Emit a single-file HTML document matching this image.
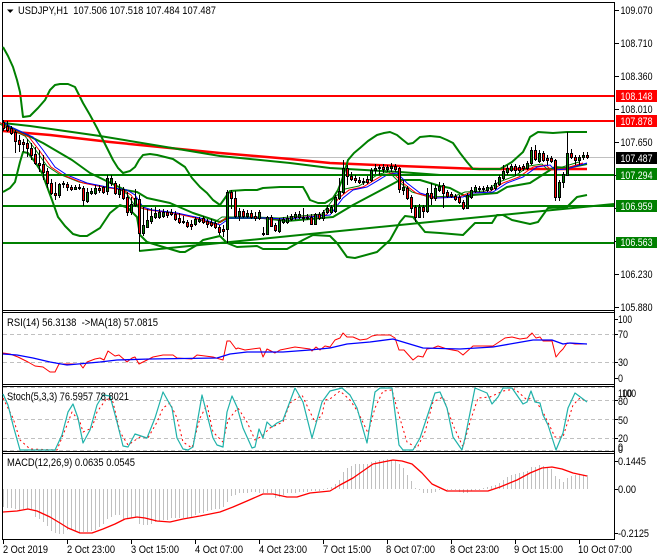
<!DOCTYPE html>
<html><head><meta charset="utf-8"><title>USDJPY,H1</title>
<style>
html,body{margin:0;padding:0;background:#fff;width:660px;height:560px;overflow:hidden}
svg{display:block}
text{font-family:"Liberation Sans",sans-serif;font-size:11px;fill:#000}
.w{fill:#fff}
.l{fill:none;stroke-linejoin:round}
</style></head><body>
<svg width="660" height="560" viewBox="0 0 660 560" xmlns="http://www.w3.org/2000/svg">
<rect width="660" height="560" fill="#fff"/>

<!-- frames -->
<g fill="#000" shape-rendering="crispEdges">
<rect x="2" y="2" width="613" height="1"/>
<rect x="2" y="310" width="613" height="1"/>
<rect x="2" y="312" width="613" height="1"/>
<rect x="2" y="384" width="613" height="1"/>
<rect x="2" y="386" width="613" height="1"/>
<rect x="2" y="451" width="613" height="1"/>
<rect x="2" y="453" width="613" height="1"/>
<rect x="2" y="539" width="613" height="1"/>
<rect x="2" y="2" width="1" height="538"/>
<rect x="614" y="2" width="1" height="538"/>
</g>

<!-- current price line -->
<path d="M3 157.5H614" stroke="#c0c0c0" fill="none" shape-rendering="crispEdges"/>

<!-- trend lines -->
<polyline class="l" stroke="#ff0000" stroke-width="2.5" points="3,131 50,135 110,142 220,153 290,159 330,163 400,166 440,167.5 480,169 587,169"/>
<polyline class="l" stroke="#008000" stroke-width="2" points="3,123 30,126 100,136 160,146 220,156 290,163 330,168 400,172 440,175 520,175"/>
<polyline class="l" stroke="#008000" stroke-width="2" points="139,251 240,241 440,221 614,204"/>

<!-- bollinger bands -->
<polyline class="l" stroke="#008000" stroke-width="2" points="3,47 8,56 13,67 17,80 20,92 23,117 30,116 38,108 45,100 50,90 55,85 60,84 68,84 75,87 80,97 83,103 90,115 97,128 107,148 113,160 118,168 123,173 130,171 135,167 139,160 143,155 150,154 157,155 173,159 185,167 192,178 200,187 207,193 213,200 220,205 225,198 230,191 245,190 257,190 263,188 280,187 303,187 307,194 310,200 318,203 325,203 333,198 338,190 342,180 348,160 354,153 360,148 368,141 377,135 384,133 390,132 397,135 403,140 408,144 413,143 420,137 430,136 440,137 447,140 453,143 460,153 467,162 473,169 500,169 512,162 523,152 527,144 530,137 538,132 553,133 567,132 587,132"/>
<polyline class="l" stroke="#008000" stroke-width="2" points="3,192 10,188 15,182 20,162 23,152 28,153 35,162 42,173 52,200 58,217 65,226 73,234 80,236 87,236 100,228 110,213 120,205 128,208 137,217 140,235 147,242 160,246 180,252 185,252 197,245 203,240 220,236 227,243 237,247 257,246 263,249 287,249 303,240 313,235 330,236 337,243 347,257 355,258 377,252 390,240 400,222 405,216 413,217 425,232 440,233 463,235 468,230 475,223 492,223 497,215 503,215 512,220 530,224 538,222 548,208 567,207 577,197 587,195"/>
<polyline class="l" stroke="#008000" stroke-width="2" points="3,123 10,127 23,133 43,143 72,160 90,173 125,190 137,192 147,198 170,203 193,213 220,222 227,218 263,218 287,221 333,217 353,205 387,187 400,180 420,180 440,186 450,188 467,197 473,195 497,193 507,187 530,183 547,172 555,167 567,168 587,164"/>

<!-- moving averages -->
<defs><polyline id="ma" fill="none" points="3,122 13,128 33,137 43,150 55,167 67,175 87,183 107,187 127,190 135,195 143,207 152,210 177,213 200,218 220,225 230,218 263,218 287,219 330,215 343,198 353,190 367,187 387,175 397,173 407,183 420,193 437,198 463,197 473,193 493,192 507,183 523,177 537,167 550,165 555,170 567,169 587,163"/></defs>
<use href="#ma" stroke="#008000" transform="translate(-8,-1)"/>
<use href="#ma" stroke="#ff0000" transform="translate(-4,0)"/>
<use href="#ma" stroke="#0000ff"/>

<!-- horizontal levels -->
<g fill="none" stroke-width="2" shape-rendering="crispEdges">
<path d="M3 96H614M3 121H614" stroke="#ff0000"/>
<path d="M3 175H614M3 206H614M3 243H614" stroke="#008000"/>
</g>

<!-- candle wicks -->
<path shape-rendering="crispEdges" stroke="#000" fill="none" d="M3.5 120V131M7.5 121V132M11.5 126V135M15.5 130V153M19.5 135V152M23.5 139V152M27.5 139V157M31.5 143V160M35.5 147V165M39.5 150V172M43.5 155V180M47.5 168V188M51.5 179V195M55.5 182V200M59.5 183V198M63.5 181V188M67.5 182V191M71.5 185V191M75.5 185V190M79.5 184V190M83.5 186V206M87.5 188V203M91.5 188V195M95.5 185V195M99.5 185V193M103.5 186V194M107.5 175V195M111.5 175V186M115.5 181V195M119.5 184V198M123.5 187V200M127.5 192V216M131.5 197V215M135.5 189V207M139.5 195V251M143.5 207V236M147.5 209V228M151.5 208V224M155.5 207V219M159.5 209V219M163.5 209V218M167.5 210V218M171.5 209V216M175.5 211V221M179.5 213V224M183.5 216V224M187.5 220V228M191.5 220V230M195.5 217V226M199.5 217V223M203.5 216V224M207.5 219V228M211.5 219V227M215.5 221V229M219.5 225V235M223.5 225V237M227.5 190V243M231.5 190V209M235.5 191V218M239.5 208V221M243.5 209V218M247.5 210V218M251.5 210V219M255.5 212V221M259.5 210V220M263.5 227V236M267.5 216V235M271.5 215V227M275.5 223V232M279.5 218V233M283.5 217V224M287.5 215V224M291.5 214V221M295.5 212V220M299.5 211V219M303.5 208V222M307.5 214V220M311.5 214V225M315.5 213V225M319.5 212V220M323.5 210V221M327.5 205V214M331.5 205V214M335.5 195V213M339.5 178V200M343.5 160V194M347.5 165V185M351.5 172V181M355.5 175V183M359.5 177V184M363.5 178V185M367.5 176V184M371.5 168V182M375.5 164V174M379.5 165V175M383.5 164V173M387.5 165V172M391.5 163V172M395.5 164V172M399.5 167V193M403.5 180V195M407.5 186V200M411.5 195V213M415.5 205V222M419.5 204V218M423.5 205V218M427.5 188V213M431.5 183V205M435.5 185V201M439.5 182V192M443.5 183V208M447.5 190V198M451.5 192V198M455.5 194V201M459.5 195V204M463.5 200V210M467.5 193V209M471.5 187V199M475.5 185V193M479.5 186V192M483.5 186V192M487.5 185V192M491.5 185V191M495.5 180V190M499.5 175V186M503.5 165V180M507.5 165V175M511.5 164V172M515.5 164V176M519.5 165V173M523.5 164V171M527.5 161V170M531.5 147V165M535.5 145V161M539.5 150V163M543.5 151V162M547.5 155V165M551.5 156V163M555.5 159V201M559.5 180V201M563.5 172V188M567.5 132V176M571.5 149V159M575.5 155V165M579.5 155V165M583.5 152V160M587.5 152V159"/>

<!-- down candles -->
<path shape-rendering="crispEdges" stroke="#000" fill="#ff0000" d="M2.5 122.5h2v6h-2zM6.5 126.5h2v4h-2zM10.5 128.5h2v5h-2zM14.5 132.5h2v9h-2zM18.5 140.5h2v4h-2zM22.5 142.5h2v2h-2zM26.5 143.5h2v5h-2zM30.5 148.5h2v7h-2zM34.5 154.5h2v9h-2zM38.5 163.5h2v2h-2zM42.5 164.5h2v8h-2zM46.5 171.5h2v12h-2zM50.5 183.5h2v10h-2zM54.5 193.5h2v2h-2zM66.5 184.5h2v3h-2zM70.5 187.5h2v2h-2zM82.5 188.5h2v12h-2zM98.5 188.5h2v2h-2zM102.5 187.5h2v5h-2zM114.5 183.5h2v10h-2zM122.5 189.5h2v9h-2zM126.5 197.5h2v15h-2zM138.5 199.5h2v34h-2zM166.5 212.5h2v3h-2zM170.5 212.5h2v2h-2zM174.5 214.5h2v5h-2zM178.5 218.5h2v4h-2zM182.5 221.5h2v1h-2zM186.5 222.5h2v4h-2zM190.5 224.5h2v2h-2zM202.5 218.5h2v4h-2zM206.5 221.5h2v3h-2zM210.5 222.5h2v3h-2zM214.5 223.5h2v4h-2zM218.5 227.5h2v5h-2zM222.5 229.5h2v2h-2zM230.5 192.5h2v6h-2zM234.5 198.5h2v18h-2zM242.5 211.5h2v5h-2zM250.5 213.5h2v4h-2zM254.5 216.5h2v2h-2zM270.5 217.5h2v9h-2zM274.5 225.5h2v5h-2zM306.5 217.5h2v1h-2zM310.5 217.5h2v7h-2zM318.5 214.5h2v4h-2zM346.5 168.5h2v8h-2zM350.5 176.5h2v3h-2zM354.5 178.5h2v2h-2zM358.5 180.5h2v2h-2zM366.5 179.5h2v3h-2zM378.5 167.5h2v1h-2zM382.5 167.5h2v2h-2zM394.5 166.5h2v3h-2zM398.5 168.5h2v21h-2zM406.5 188.5h2v10h-2zM410.5 197.5h2v11h-2zM414.5 207.5h2v10h-2zM422.5 207.5h2v4h-2zM430.5 193.5h2v5h-2zM442.5 185.5h2v8h-2zM446.5 192.5h2v4h-2zM450.5 194.5h2v2h-2zM454.5 196.5h2v3h-2zM458.5 197.5h2v5h-2zM462.5 202.5h2v6h-2zM514.5 166.5h2v4h-2zM518.5 167.5h2v3h-2zM522.5 166.5h2v2h-2zM534.5 150.5h2v9h-2zM542.5 153.5h2v7h-2zM546.5 158.5h2v2h-2zM550.5 158.5h2v3h-2zM554.5 160.5h2v37h-2zM570.5 153.5h2v4h-2zM574.5 157.5h2v3h-2zM586.5 155.5h2v2h-2z"/>

<!-- up candles -->
<path shape-rendering="crispEdges" stroke="#000" fill="#008000" d="M58.5 184.5h2v11h-2zM62.5 183.5h2v1h-2zM74.5 187.5h2v2h-2zM78.5 187.5h2v1h-2zM86.5 192.5h2v9h-2zM90.5 191.5h2v2h-2zM94.5 188.5h2v5h-2zM106.5 178.5h2v13h-2zM110.5 178.5h2v5h-2zM118.5 189.5h2v5h-2zM130.5 204.5h2v8h-2zM134.5 198.5h2v7h-2zM142.5 225.5h2v8h-2zM146.5 220.5h2v7h-2zM150.5 216.5h2v5h-2zM154.5 213.5h2v4h-2zM158.5 212.5h2v5h-2zM162.5 212.5h2v4h-2zM194.5 219.5h2v5h-2zM198.5 219.5h2v2h-2zM226.5 192.5h2v37h-2zM238.5 211.5h2v5h-2zM246.5 213.5h2v3h-2zM258.5 212.5h2v6h-2zM262.5 233.5h2v1h-2zM266.5 217.5h2v17h-2zM278.5 220.5h2v11h-2zM282.5 219.5h2v3h-2zM286.5 218.5h2v4h-2zM290.5 216.5h2v3h-2zM294.5 214.5h2v3h-2zM298.5 214.5h2v3h-2zM302.5 217.5h2v1h-2zM314.5 214.5h2v10h-2zM322.5 212.5h2v6h-2zM326.5 208.5h2v4h-2zM330.5 207.5h2v5h-2zM334.5 197.5h2v14h-2zM338.5 191.5h2v7h-2zM342.5 168.5h2v24h-2zM362.5 181.5h2v1h-2zM370.5 170.5h2v10h-2zM374.5 168.5h2v2h-2zM386.5 167.5h2v2h-2zM390.5 166.5h2v2h-2zM402.5 187.5h2v3h-2zM418.5 207.5h2v10h-2zM426.5 193.5h2v18h-2zM434.5 188.5h2v10h-2zM438.5 186.5h2v4h-2zM466.5 195.5h2v13h-2zM470.5 190.5h2v7h-2zM474.5 187.5h2v4h-2zM478.5 188.5h2v1h-2zM482.5 188.5h2v1h-2zM486.5 187.5h2v3h-2zM490.5 187.5h2v2h-2zM494.5 183.5h2v5h-2zM498.5 177.5h2v7h-2zM502.5 171.5h2v7h-2zM506.5 168.5h2v4h-2zM510.5 166.5h2v4h-2zM526.5 163.5h2v5h-2zM530.5 150.5h2v13h-2zM538.5 153.5h2v8h-2zM558.5 182.5h2v15h-2zM562.5 174.5h2v8h-2zM566.5 153.5h2v22h-2zM578.5 157.5h2v3h-2zM582.5 155.5h2v2h-2z"/>

<!-- RSI -->
<path d="M3 334.5H614M3 362.5H614" stroke="#c0c0c0" stroke-dasharray="4 3" fill="none" shape-rendering="crispEdges"/>
<polyline class="l" stroke="#ff0000" points="3,353 10,354 18,357 28,362 35,366 43,367 50,372 55,372 59,364 80,364 83,368 87,362 95,359 100,358 104,360 108,351 115,356 119,355 127,362 132,358 135,357 139,364 147,360 153,357 163,355 173,355 177,358 192,359 197,355 213,357 223,360 227,341 230,341 236,349 238,348 245,350 260,348 263,357 267,349 275,353 280,350 295,347 310,349 312,351 316,347 320,350 325,346 330,347 335,340 340,338 343,333 347,337 353,337 360,340 367,339 372,336 377,335 390,335 395,338 399,350 404,350 413,360 418,356 423,357 427,349 433,348 438,346 447,349 458,351 463,355 473,346 487,346 493,346 505,338 512,337 520,339 527,338 532,333 536,338 540,337 543,341 552,341 556,357 560,352 563,349 567,343 570,343 575,344 582,344 587,344"/>
<polyline class="l" stroke="#0000ff" stroke-width="1.3" points="3,354 17,355 33,358 50,362 67,365 100,362 117,360 150,359 217,358 230,354 247,352 283,352 310,350 330,348 347,344 370,342 393,339 403,342 423,348 460,349 493,347 510,344 533,340 552,340 563,344 570,343 587,344"/>

<!-- Stochastic -->
<path d="M3 387.5H614M3 400.5H614M3 419.5H614M3 438.5H614M3 450.5H614" stroke="#c0c0c0" stroke-dasharray="4 3" fill="none" shape-rendering="crispEdges"/>
<polyline class="l" stroke="#ff0000" stroke-dasharray="2 3" points="3,398 8,408 13,418 20,440 30,449 57,450 67,425 72,412 80,422 83,432 92,428 97,412 107,398 113,402 120,432 128,445 140,437 148,438 157,422 163,408 170,403 177,418 183,442 192,448 200,418 207,405 213,432 223,442 228,420 238,408 247,422 255,440 262,436 270,428 283,422 290,403 302,395 310,412 315,422 322,415 325,400 330,399 340,391 350,400 358,412 368,433 375,408 383,391 392,390 398,412 407,442 417,448 425,432 433,402 443,397 453,425 463,447 470,422 478,398 490,397 503,391 515,389 527,400 533,397 543,412 555,437 563,437 573,405 580,398 587,402"/>
<polyline class="l" stroke="#20b2aa" stroke-width="1.2" points="3,394 8,405 13,425 20,450 55,450 62,435 68,412 73,404 78,418 83,443 90,430 97,405 103,395 110,396 117,422 123,446 128,447 135,434 147,438 155,418 163,392 172,408 177,438 183,449 188,450 193,447 202,395 213,438 217,445 223,447 227,412 232,396 237,407 243,428 252,448 255,447 259,429 263,438 267,422 272,427 277,423 283,420 295,388 303,402 312,438 322,402 330,391 342,388 350,395 357,408 367,443 375,392 380,388 392,388 399,445 403,450 413,450 420,438 430,408 435,393 440,392 447,408 453,437 462,450 465,438 475,388 487,393 492,404 498,397 503,388 512,388 523,404 527,402 531,391 535,402 540,403 543,415 548,425 556,450 563,433 568,408 575,393 587,402"/>

<!-- MACD histogram -->
<path shape-rendering="crispEdges" stroke="#c0c0c0" fill="none" d="M3.5 489V507M7.5 489V508M11.5 489V508M15.5 489V509M19.5 489V510M23.5 489V509M27.5 489V509M31.5 489V509M35.5 489V517M39.5 489V519M43.5 489V522M47.5 489V526M51.5 489V531M55.5 489V533M59.5 489V534M63.5 489V534M67.5 489V530M71.5 489V529M75.5 489V531M79.5 489V532M83.5 489V532M87.5 489V532M91.5 489V531M95.5 489V530M99.5 489V527M103.5 489V524M107.5 489V519M111.5 489V517M115.5 489V515M119.5 489V515M123.5 489V520M127.5 489V518M131.5 489V518M135.5 489V518M139.5 489V524M143.5 489V525M147.5 489V525M151.5 489V524M155.5 489V522M159.5 489V521M163.5 489V520M167.5 489V520M171.5 489V518M175.5 489V518M179.5 489V518M183.5 489V518M187.5 489V518M191.5 489V518M195.5 489V515M199.5 489V513M203.5 489V513M207.5 489V511M211.5 489V510M215.5 489V509M219.5 489V509M223.5 489V507M227.5 489V502M231.5 489V496M235.5 489V495M239.5 489V493M243.5 489V493M247.5 489V493M251.5 489V492M255.5 489V492M259.5 489V493M263.5 489V493M267.5 489V493M271.5 489V493M275.5 489V498M279.5 489V497M283.5 489V495M287.5 489V493M291.5 489V493M295.5 489V493M299.5 489V492M303.5 489V492M307.5 489V492M311.5 489V491M315.5 489V491M319.5 489V491M323.5 489V490M327.5 489V488M331.5 489V487M335.5 489V484M339.5 489V480M343.5 489V472M347.5 489V468M351.5 489V466M355.5 489V464M359.5 489V464M363.5 489V464M367.5 489V464M371.5 489V462M375.5 489V461M379.5 489V460M383.5 489V460M387.5 489V459M391.5 489V460M395.5 489V461M399.5 489V464M403.5 489V468M407.5 489V475M411.5 489V481M415.5 489V488M419.5 489V490M423.5 489V493M427.5 489V493M431.5 489V493M435.5 489V492M439.5 489V490M443.5 489V490M447.5 489V490M451.5 489V490M455.5 489V490M459.5 489V492M463.5 489V493M467.5 489V493M471.5 489V491M475.5 489V490M479.5 489V490M483.5 489V488M487.5 489V487M491.5 489V486M495.5 489V485M499.5 489V483M503.5 489V480M507.5 489V477M511.5 489V475M515.5 489V474M519.5 489V473M523.5 489V472M527.5 489V471M531.5 489V467M535.5 489V467M539.5 489V465M543.5 489V466M547.5 489V467M551.5 489V469M555.5 489V476M559.5 489V479M563.5 489V482M567.5 489V478M571.5 489V476M575.5 489V475M579.5 489V475M583.5 489V475M587.5 489V475"/>
<polyline class="l" stroke="#ff0000" stroke-width="1.3" points="3,512 17,511 28,509 37,511 50,517 60,523 68,528 80,533 92,533 103,529 115,524 125,519 137,517 145,518 157,521 170,522 183,519 200,516 220,512 233,507 247,501 263,494 273,494 287,497 297,497 310,493 330,491 340,485 353,478 363,471 373,464 383,462 393,460 402,461 412,464 422,473 432,484 447,491 488,491 500,487 517,480 530,473 542,468 552,467 562,469 573,473 587,476"/>

<!-- axis ticks -->
<path shape-rendering="crispEdges" stroke="#000" fill="none" d="M615 10.5h4M615 43.5h4M615 76.5h4M615 109.5h4M615 142.5h4M615 175.5h4M615 208.5h4M615 241.5h4M615 274.5h4M615 307.5h4M615 319.5h3M615 334.5h3M615 362.5h3M615 378.5h3M615 400.5h3M615 419.5h3M615 438.5h3M615 461.5h3M615 489.5h3M615 533.5h3M3.5 540v4M67.5 540v4M131.5 540v4M195.5 540v4M259.5 540v4M323.5 540v4M387.5 540v4M451.5 540v4M515.5 540v4M579.5 540v4"/>

<!-- price tags -->
<g shape-rendering="crispEdges">
<rect x="616" y="90" width="41" height="12" fill="#ff0000"/>
<rect x="616" y="115" width="41" height="12" fill="#ff0000"/>
<rect x="616" y="152" width="41" height="12" fill="#000"/>
<rect x="616" y="168" width="41" height="12" fill="#008000"/>
<rect x="616" y="200" width="41" height="12" fill="#008000"/>
<rect x="616" y="237" width="41" height="11" fill="#008000"/>
</g>

<!-- header -->
<polygon points="7,9.5 13.5,9.5 10.2,13" fill="#000"/>
<text x="18" y="14" textLength="198" lengthAdjust="spacingAndGlyphs" xml:space="preserve">USDJPY,H1  107.506 107.518 107.484 107.487</text>
<text x="7" y="326" textLength="151" lengthAdjust="spacingAndGlyphs" xml:space="preserve">RSI(14) 56.3138  -&gt;MA(18) 57.0815</text>
<text x="7" y="400" textLength="122" lengthAdjust="spacingAndGlyphs">Stoch(5,3,3) 76.5957 78.8021</text>
<text x="7" y="466" textLength="128" lengthAdjust="spacingAndGlyphs">MACD(12,26,9) 0.0635 0.0545</text>

<!-- price axis -->
<g>
<text x="620.5" y="14" textLength="32" lengthAdjust="spacingAndGlyphs">109.070</text>
<text x="620.5" y="47" textLength="32" lengthAdjust="spacingAndGlyphs">108.710</text>
<text x="620.5" y="80" textLength="32" lengthAdjust="spacingAndGlyphs">108.360</text>
<text x="620.5" y="113" textLength="32" lengthAdjust="spacingAndGlyphs">108.010</text>
<text x="620.5" y="146" textLength="32" lengthAdjust="spacingAndGlyphs">107.650</text>
<text x="620.5" y="278" textLength="32" lengthAdjust="spacingAndGlyphs">106.230</text>
<text x="620.5" y="311" textLength="32" lengthAdjust="spacingAndGlyphs">105.880</text>
<text class="w" x="620.5" y="100" textLength="32" lengthAdjust="spacingAndGlyphs">108.148</text>
<text class="w" x="620.5" y="125" textLength="32" lengthAdjust="spacingAndGlyphs">107.878</text>
<text class="w" x="620.5" y="162" textLength="32" lengthAdjust="spacingAndGlyphs">107.487</text>
<text class="w" x="620.5" y="179" textLength="32" lengthAdjust="spacingAndGlyphs">107.294</text>
<text class="w" x="620.5" y="210" textLength="32" lengthAdjust="spacingAndGlyphs">106.959</text>
<text class="w" x="620.5" y="246" textLength="32" lengthAdjust="spacingAndGlyphs">106.563</text>
<text x="618" y="323" textLength="14" lengthAdjust="spacingAndGlyphs">100</text>
<text x="618" y="338" textLength="10" lengthAdjust="spacingAndGlyphs">70</text>
<text x="618" y="366" textLength="10" lengthAdjust="spacingAndGlyphs">30</text>
<text x="618" y="382" textLength="5" lengthAdjust="spacingAndGlyphs">0</text>
<text x="618" y="397" textLength="14" lengthAdjust="spacingAndGlyphs">100</text>
<text x="622" y="397" textLength="14" lengthAdjust="spacingAndGlyphs">100</text>
<text x="618" y="405" textLength="10" lengthAdjust="spacingAndGlyphs">80</text>
<text x="618" y="424" textLength="10" lengthAdjust="spacingAndGlyphs">50</text>
<text x="618" y="442" textLength="10" lengthAdjust="spacingAndGlyphs">20</text>
<text x="618" y="451" textLength="5" lengthAdjust="spacingAndGlyphs">0</text>
<text x="618" y="453" textLength="5" lengthAdjust="spacingAndGlyphs">0</text>
<text x="618" y="465" textLength="28" lengthAdjust="spacingAndGlyphs">0.1445</text>
<text x="618" y="493" textLength="18" lengthAdjust="spacingAndGlyphs">0.00</text>
<text x="618" y="537" textLength="31" lengthAdjust="spacingAndGlyphs">-0.2125</text>
</g>

<!-- time axis -->
<g>
<text x="3" y="553" textLength="45" lengthAdjust="spacingAndGlyphs">2 Oct 2019</text>
<text x="67" y="553" textLength="48" lengthAdjust="spacingAndGlyphs">2 Oct 23:00</text>
<text x="131" y="553" textLength="48" lengthAdjust="spacingAndGlyphs">3 Oct 15:00</text>
<text x="195" y="553" textLength="48" lengthAdjust="spacingAndGlyphs">4 Oct 07:00</text>
<text x="259" y="553" textLength="48" lengthAdjust="spacingAndGlyphs">4 Oct 23:00</text>
<text x="323" y="553" textLength="48" lengthAdjust="spacingAndGlyphs">7 Oct 15:00</text>
<text x="386" y="553" textLength="49" lengthAdjust="spacingAndGlyphs">8 Oct 07:00</text>
<text x="450" y="553" textLength="49" lengthAdjust="spacingAndGlyphs">8 Oct 23:00</text>
<text x="514" y="553" textLength="49" lengthAdjust="spacingAndGlyphs">9 Oct 15:00</text>
<text x="578" y="553" textLength="54" lengthAdjust="spacingAndGlyphs">10 Oct 07:00</text>
</g>
</svg>
</body></html>
